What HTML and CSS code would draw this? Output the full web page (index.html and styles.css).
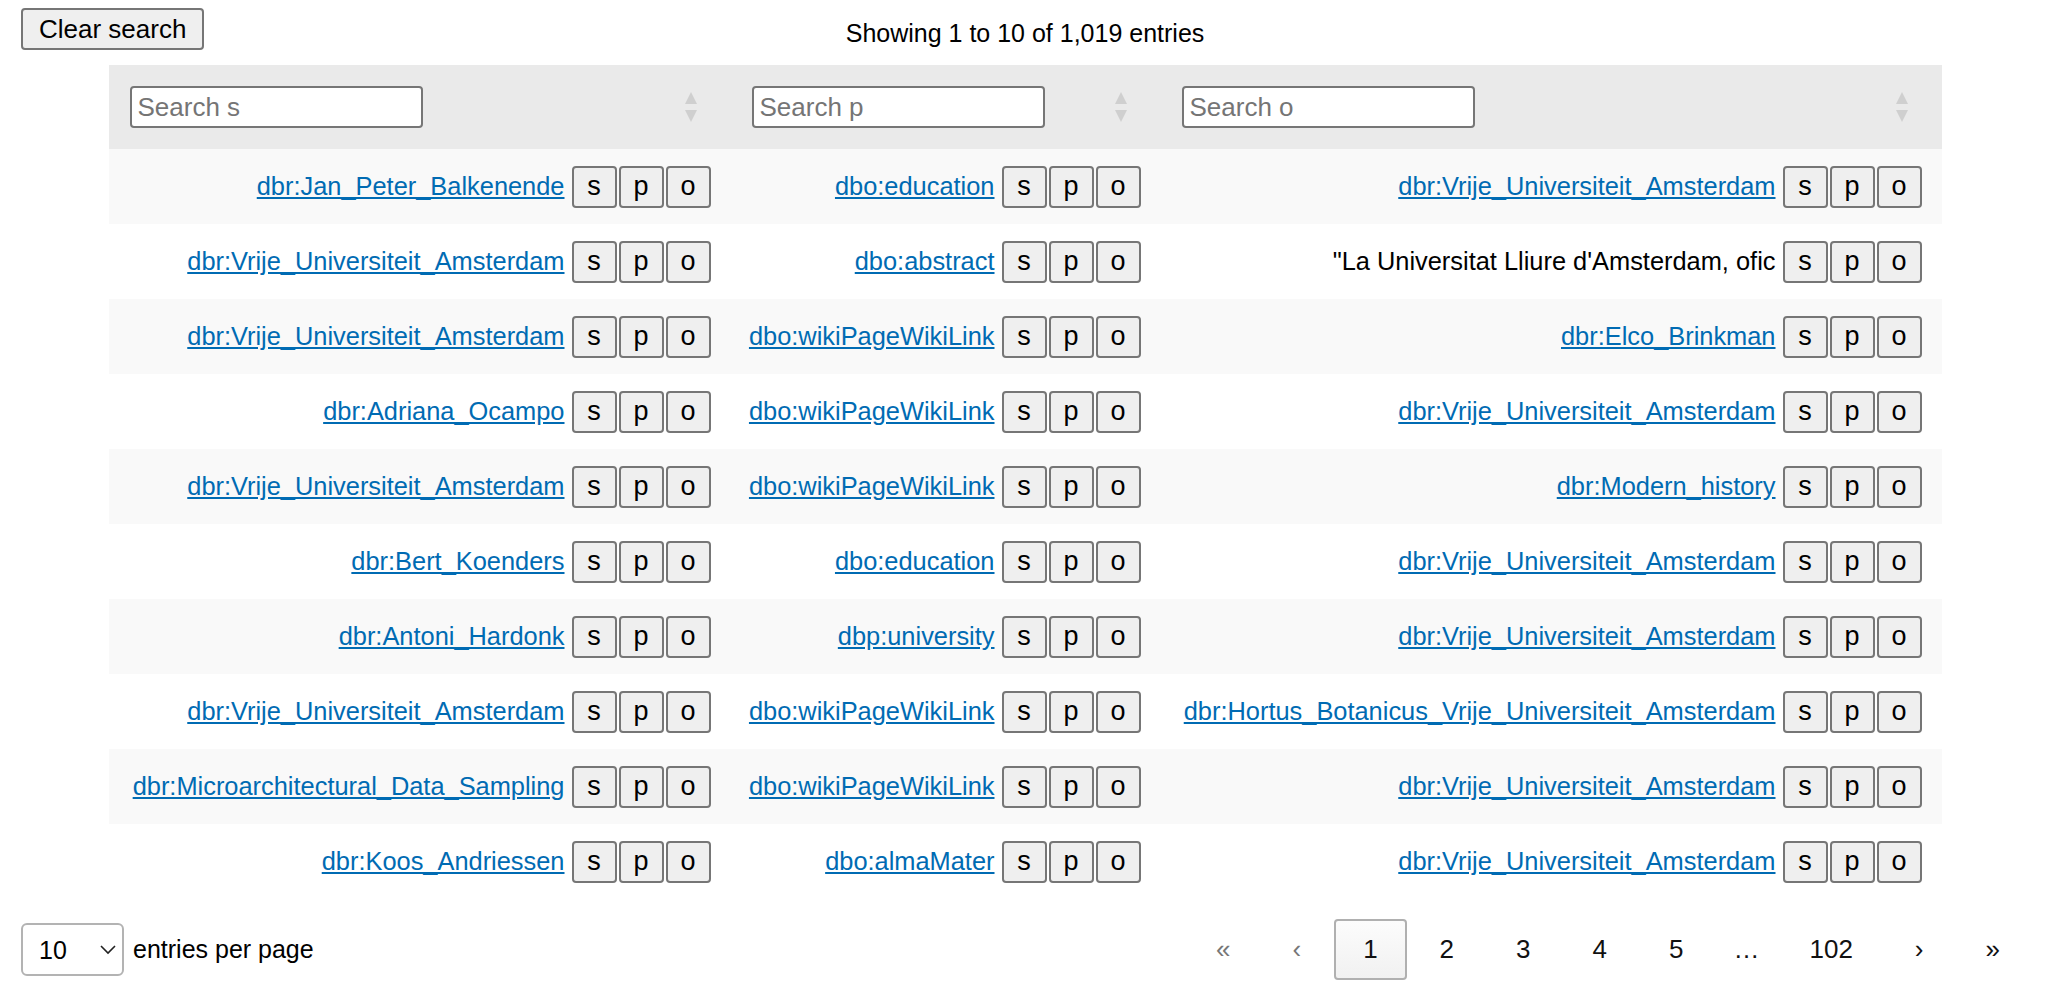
FILE: index.html
```html
<!DOCTYPE html>
<html lang="en">
<head>
<meta charset="utf-8">
<title>Triples</title>
<link rel="stylesheet" href="styles.css">
</head>
<body>
<div class="top-row">
  <button class="clear-btn" type="button">Clear search</button>
  <div class="info">Showing 1 to 10 of 1,019 entries</div>
  <div></div>
</div>

<table class="triples">
  <colgroup>
    <col class="col-s">
    <col class="col-p">
    <col class="col-o">
  </colgroup>
  <thead>
    <tr>
      <th><div class="th-inner"><input class="search" type="text" placeholder="Search s"><svg class="sort" width="12" height="30" viewBox="0 0 12 30"><path d="M6 0 L12 12 L0 12 Z"/><path d="M0 18 L12 18 L6 30 Z"/></svg></div></th>
      <th><div class="th-inner"><input class="search" type="text" placeholder="Search p"><svg class="sort" width="12" height="30" viewBox="0 0 12 30"><path d="M6 0 L12 12 L0 12 Z"/><path d="M0 18 L12 18 L6 30 Z"/></svg></div></th>
      <th><div class="th-inner"><input class="search" type="text" placeholder="Search o"><svg class="sort" width="12" height="30" viewBox="0 0 12 30"><path d="M6 0 L12 12 L0 12 Z"/><path d="M0 18 L12 18 L6 30 Z"/></svg></div></th>
    </tr>
  </thead>
  <tbody>
    <tr>
      <td><div class="cell"><a href="#">dbr:Jan_Peter_Balkenende</a><span class="spo"><button>s</button><button>p</button><button>o</button></span></div></td>
      <td><div class="cell"><a href="#">dbo:education</a><span class="spo"><button>s</button><button>p</button><button>o</button></span></div></td>
      <td><div class="cell"><a href="#">dbr:Vrije_Universiteit_Amsterdam</a><span class="spo"><button>s</button><button>p</button><button>o</button></span></div></td>
    </tr>
    <tr>
      <td><div class="cell"><a href="#">dbr:Vrije_Universiteit_Amsterdam</a><span class="spo"><button>s</button><button>p</button><button>o</button></span></div></td>
      <td><div class="cell"><a href="#">dbo:abstract</a><span class="spo"><button>s</button><button>p</button><button>o</button></span></div></td>
      <td><div class="cell"><span class="literal">"La Universitat Lliure d'Amsterdam, ofic</span><span class="spo"><button>s</button><button>p</button><button>o</button></span></div></td>
    </tr>
    <tr>
      <td><div class="cell"><a href="#">dbr:Vrije_Universiteit_Amsterdam</a><span class="spo"><button>s</button><button>p</button><button>o</button></span></div></td>
      <td><div class="cell"><a href="#">dbo:wikiPageWikiLink</a><span class="spo"><button>s</button><button>p</button><button>o</button></span></div></td>
      <td><div class="cell"><a href="#">dbr:Elco_Brinkman</a><span class="spo"><button>s</button><button>p</button><button>o</button></span></div></td>
    </tr>
    <tr>
      <td><div class="cell"><a href="#">dbr:Adriana_Ocampo</a><span class="spo"><button>s</button><button>p</button><button>o</button></span></div></td>
      <td><div class="cell"><a href="#">dbo:wikiPageWikiLink</a><span class="spo"><button>s</button><button>p</button><button>o</button></span></div></td>
      <td><div class="cell"><a href="#">dbr:Vrije_Universiteit_Amsterdam</a><span class="spo"><button>s</button><button>p</button><button>o</button></span></div></td>
    </tr>
    <tr>
      <td><div class="cell"><a href="#">dbr:Vrije_Universiteit_Amsterdam</a><span class="spo"><button>s</button><button>p</button><button>o</button></span></div></td>
      <td><div class="cell"><a href="#">dbo:wikiPageWikiLink</a><span class="spo"><button>s</button><button>p</button><button>o</button></span></div></td>
      <td><div class="cell"><a href="#">dbr:Modern_history</a><span class="spo"><button>s</button><button>p</button><button>o</button></span></div></td>
    </tr>
    <tr>
      <td><div class="cell"><a href="#">dbr:Bert_Koenders</a><span class="spo"><button>s</button><button>p</button><button>o</button></span></div></td>
      <td><div class="cell"><a href="#">dbo:education</a><span class="spo"><button>s</button><button>p</button><button>o</button></span></div></td>
      <td><div class="cell"><a href="#">dbr:Vrije_Universiteit_Amsterdam</a><span class="spo"><button>s</button><button>p</button><button>o</button></span></div></td>
    </tr>
    <tr>
      <td><div class="cell"><a href="#">dbr:Antoni_Hardonk</a><span class="spo"><button>s</button><button>p</button><button>o</button></span></div></td>
      <td><div class="cell"><a href="#">dbp:university</a><span class="spo"><button>s</button><button>p</button><button>o</button></span></div></td>
      <td><div class="cell"><a href="#">dbr:Vrije_Universiteit_Amsterdam</a><span class="spo"><button>s</button><button>p</button><button>o</button></span></div></td>
    </tr>
    <tr>
      <td><div class="cell"><a href="#">dbr:Vrije_Universiteit_Amsterdam</a><span class="spo"><button>s</button><button>p</button><button>o</button></span></div></td>
      <td><div class="cell"><a href="#">dbo:wikiPageWikiLink</a><span class="spo"><button>s</button><button>p</button><button>o</button></span></div></td>
      <td><div class="cell"><a href="#">dbr:Hortus_Botanicus_Vrije_Universiteit_Amsterdam</a><span class="spo"><button>s</button><button>p</button><button>o</button></span></div></td>
    </tr>
    <tr>
      <td><div class="cell"><a href="#">dbr:Microarchitectural_Data_Sampling</a><span class="spo"><button>s</button><button>p</button><button>o</button></span></div></td>
      <td><div class="cell"><a href="#">dbo:wikiPageWikiLink</a><span class="spo"><button>s</button><button>p</button><button>o</button></span></div></td>
      <td><div class="cell"><a href="#">dbr:Vrije_Universiteit_Amsterdam</a><span class="spo"><button>s</button><button>p</button><button>o</button></span></div></td>
    </tr>
    <tr>
      <td><div class="cell"><a href="#">dbr:Koos_Andriessen</a><span class="spo"><button>s</button><button>p</button><button>o</button></span></div></td>
      <td><div class="cell"><a href="#">dbo:almaMater</a><span class="spo"><button>s</button><button>p</button><button>o</button></span></div></td>
      <td><div class="cell"><a href="#">dbr:Vrije_Universiteit_Amsterdam</a><span class="spo"><button>s</button><button>p</button><button>o</button></span></div></td>
    </tr>
  </tbody>
</table>

<div class="bottom-row">
  <div class="length">
    <div class="select-wrap">
      <select class="per-page">
        <option>10</option>
        <option>25</option>
        <option>50</option>
        <option>100</option>
      </select>
      <svg class="chev" width="16" height="10" viewBox="0 0 16 10"><path d="M1 1 L8 8 L15 1" fill="none" stroke="#222" stroke-width="1.6"/></svg>
    </div>
    <span class="length-label">entries per page</span>
  </div>
  <nav class="pager">
    <span class="pg disabled">«</span>
    <span class="pg disabled">‹</span>
    <span class="pg current">1</span>
    <span class="pg">2</span>
    <span class="pg">3</span>
    <span class="pg">4</span>
    <span class="pg">5</span>
    <span class="pg ellipsis">…</span>
    <span class="pg">102</span>
    <span class="pg">›</span>
    <span class="pg">»</span>
  </nav>
</div>
</body>
</html>
```

FILE: styles.css
```css
* { box-sizing: border-box; }

html, body {
  margin: 0;
  background: #fff;
}

body {
  padding: 0 19px 0 21px;
  font-family: "Liberation Sans", Arial, Helvetica, sans-serif;
  font-size: 25px;
  color: #000;
}

.top-row {
  display: grid;
  grid-template-columns: 1fr auto 1fr;
  align-items: start;
  padding-top: 8px;
}

.clear-btn {
  justify-self: start;
  height: 42px;
  padding: 0 16px;
  font-family: "Liberation Sans", Arial, sans-serif;
  font-size: 26px;
  color: #000;
  background: #efefef;
  border: 2px solid #767676;
  border-radius: 4px;
}

.info {
  margin-top: 10px;
  line-height: 30px;
  font-size: 25px;
}

.triples {
  width: 1833px;
  margin: 15px auto 0;
  border-collapse: collapse;
  table-layout: fixed;
}

.col-s { width: 622px; }
.col-p { width: 430px; }
.col-o { width: 781px; }

.triples thead th {
  height: 84px;
  padding: 0 34px 0 21px;
  background: #eaeaea;
  font-weight: normal;
  text-align: left;
}

.th-inner {
  display: flex;
  align-items: center;
  justify-content: space-between;
}

.search {
  width: 293px;
  height: 42px;
  padding: 0 6px;
  font-family: "Liberation Sans", Arial, sans-serif;
  font-size: 26px;
  color: #000;
  background: #fff;
  border: 2px solid #767676;
  border-radius: 4px;
}

.search::placeholder { color: #757575; }

.sort { fill: #cfcfcf; display: block; }

.triples tbody td {
  height: 75px;
  padding: 0 20px 0 21px;
  font-size: 25.4px;
  white-space: nowrap;
}

.triples tbody tr:nth-child(odd) td { background: #f9f9f9; }

.cell {
  display: flex;
  align-items: center;
  justify-content: flex-end;
  gap: 7px;
}

.cell a {
  color: #006bb3;
  text-decoration: underline;
  text-underline-offset: 2px;
}

.literal { color: #000; }

.spo {
  display: flex;
  gap: 2px;
}

.spo button {
  width: 45px;
  height: 42px;
  padding: 0;
  font-family: "Liberation Sans", Arial, sans-serif;
  font-size: 27px;
  color: #000;
  background: #efefef;
  border: 2px solid #767676;
  border-radius: 4px;
}

.bottom-row {
  display: flex;
  align-items: center;
  justify-content: space-between;
  margin-top: 20px;
}

.length {
  display: flex;
  align-items: center;
}

.select-wrap {
  position: relative;
  display: flex;
}

.per-page {
  appearance: none;
  -webkit-appearance: none;
  width: 103px;
  height: 53px;
  padding: 0 0 0 16px;
  font-family: "Liberation Sans", Arial, sans-serif;
  font-size: 25px;
  color: #000;
  background: #fff;
  border: 2px solid #b3b3b3;
  border-radius: 6px;
}

.chev {
  position: absolute;
  right: 8px;
  top: 22px;
  pointer-events: none;
}

.length-label {
  margin-left: 9px;
}

.pager {
  display: flex;
  align-items: center;
  gap: 4px;
}

.pg {
  display: block;
  padding: 13px 27px;
  line-height: 31px;
  font-size: 26px;
  color: #111;
  border: 2px solid transparent;
  border-radius: 4px;
}

.pg.disabled { color: #777; }

.pg.ellipsis { padding: 13px 15px; }

.pg.current {
  border-color: #b0b0b0;
  background: linear-gradient(to bottom, #fcfcfc 0%, #f1f1f1 100%);
}
```
